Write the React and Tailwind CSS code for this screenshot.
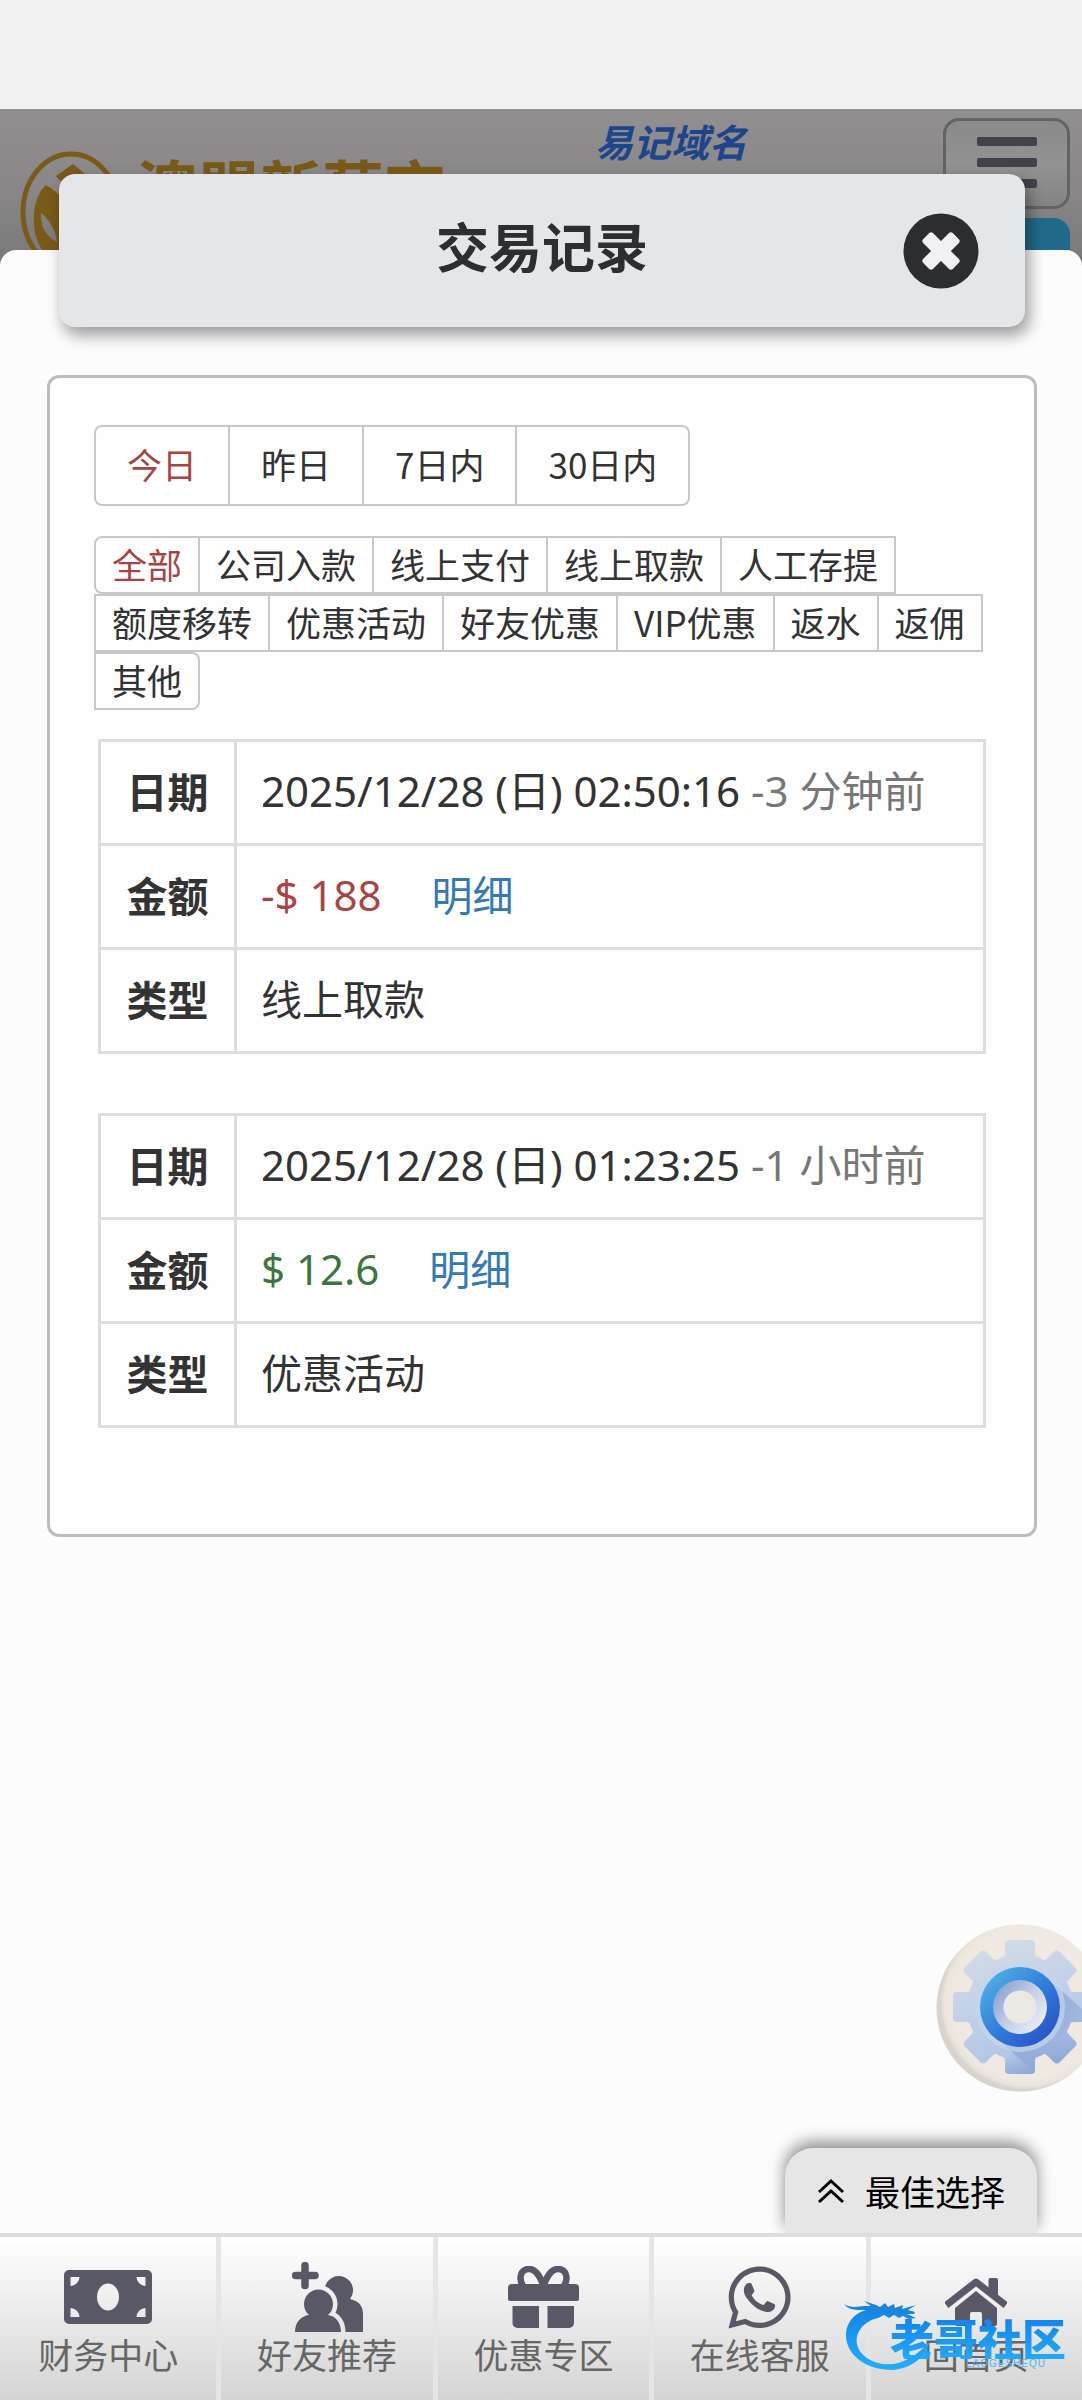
import React from "react";
import { FaWhatsapp } from "react-icons/fa";

const dates = ["今日", "昨日", "7日内", "30日内"];
const categories = [
  ["全部", "公司入款", "线上支付", "线上取款", "人工存提"],
  ["额度移转", "优惠活动", "好友优惠", "VIP优惠", "返水", "返佣"],
  ["其他"],
];
const records = [
  { time: "2025/12/28 (日) 02:50:16", ago: "-3 分钟前", amount: "-$ 188", negative: true, type: "线上取款" },
  { time: "2025/12/28 (日) 01:23:25", ago: "-1 小时前", amount: "$ 12.6", negative: false, type: "优惠活动" },
];

function Emblem() {
  return (
    <svg viewBox="0 0 104 122" className="h-[122px] w-[104px] shrink-0" aria-hidden="true">
      <ellipse cx="52" cy="61" rx="48" ry="58" fill="none" stroke="#7a5a17" strokeWidth="5" />
      <path d="M54 13 L66 23 L54 34 L40 29 L37 25 Z" fill="#7a5a17" />
      <path fillRule="evenodd" d="M27 34 C12 46 9 88 28 104 L52 116 V60 C44 46 37 40 27 34 Z M22 62 C28 66 37 78 38 91 C28 86 21 76 22 62 Z" fill="#7a5a17" />
      <path d="M78 33 C94 46 97 88 75 104 L54 116 V60 C60 46 67 38 78 33 Z" fill="#7a5a17" />
    </svg>
  );
}

function SiteHeader() {
  return (
    <header className="flex h-[165px] items-start overflow-hidden bg-gradient-to-b from-[#918f90] via-[#888686] to-[#777]">
      <div className="mt-[42px] ml-[19px] flex shrink-0 items-start">
        <Emblem />
        <span className="ml-[13px] text-[62px] leading-[70px] font-bold whitespace-nowrap text-[#7a5a17]">澳盟新葡京</span>
      </div>
      <a href="#domain" className="mt-2 ml-[149px] text-[38px] leading-[48px] font-bold whitespace-nowrap text-[#1c458c] italic">
        易记域名
      </a>
      <div className="mt-[9px] mr-3 ml-auto flex flex-col gap-[9px]">
        <button type="button" aria-label="菜单" className="flex h-[91px] w-[127px] flex-col items-center gap-[12px] rounded-2xl border-3 border-[#636363] bg-gradient-to-b from-[#8b8a8a] via-[#929292] to-[#858484] pt-[16px]">
          <span className="h-[9px] w-[60px] rounded-xs bg-[#41404b]" />
          <span className="h-[9px] w-[60px] rounded-xs bg-[#41404b]" />
          <span className="h-[9px] w-[60px] rounded-xs bg-[#41404b]" />
        </button>
        <div className="h-[60px] rounded-2xl bg-[#226a8b]" />
      </div>
    </header>
  );
}

function CloseIcon() {
  return (
    <svg viewBox="0 0 76 76" className="size-[76px]" aria-hidden="true">
      <circle cx="38" cy="38" r="37.5" fill="#2c2d2e" />
      <g fill="#f1f1f4">
        <rect x="17" y="31" width="42" height="14" rx="3" transform="rotate(45 38 38)" />
        <rect x="17" y="31" width="42" height="14" rx="3" transform="rotate(-45 38 38)" />
      </g>
    </svg>
  );
}

function Record({ item }) {
  const th = "w-[136px] border-3 border-[#ddd] pb-[6px] text-center font-bold";
  const td = "border-3 border-[#ddd] pb-1 pl-[24px] text-left font-['Noto_Sans','Noto_Sans_CJK_SC',sans-serif]";
  return (
    <div className="px-1">
      <table className="w-full table-fixed border-collapse text-[41px] leading-[56px] whitespace-nowrap">
        <tbody>
          <tr className="h-[104px]">
            <th scope="row" className={th}>日期</th>
            <td className={td}>
              <span className="text-[42px]">
                {item.time} <span className="text-[#777]">{item.ago}</span>
              </span>
            </td>
          </tr>
          <tr className="h-[104px]">
            <th scope="row" className={th}>金额</th>
            <td className={td}>
              <span className={item.negative ? "text-[42px] text-[#a94442]" : "text-[42px] text-[#3c763d]"}>{item.amount}</span>
              <a href="#detail" className="ml-[50px] text-[#337ab7]">明细</a>
            </td>
          </tr>
          <tr className="h-[104px]">
            <th scope="row" className={th}>类型</th>
            <td className={td}>{item.type}</td>
          </tr>
        </tbody>
      </table>
    </div>
  );
}

function MoneyIcon() {
  return (
    <svg viewBox="0 0 88 54" className="h-[54px] w-[88px]" fill="currentColor" aria-hidden="true">
      <path
        fillRule="evenodd"
        d="M5 0 H83 A5 5 0 0 1 88 5 V49 A5 5 0 0 1 83 54 H5 A5 5 0 0 1 0 49 V5 A5 5 0 0 1 5 0 Z M6.5 7 V16 A9 9 0 0 0 15.5 7 Z M81.5 7 H72.5 A9 9 0 0 0 81.5 16 Z M6.5 47 H15.5 A9 9 0 0 0 6.5 38 Z M81.5 47 V38 A9 9 0 0 0 72.5 47 Z M44 13.5 A11 13.5 0 0 0 44 40.5 A11 13.5 0 0 0 44 13.5 Z"
      />
    </svg>
  );
}

function FriendsIcon() {
  const front = "M3 70 C3 60 9 54 17 53 A14.5 14.5 0 1 1 36 53 C44 54 49 61 49 70 Z";
  return (
    <svg viewBox="0 0 71 71" className="size-[71px]" aria-hidden="true">
      <mask id="friend-gap" maskUnits="userSpaceOnUse" x="0" y="0" width="71" height="71">
        <rect width="71" height="71" fill="white" />
        <path d={front} fill="black" stroke="black" strokeWidth="9" />
      </mask>
      <path d="M13 3.5 V23.5 M3.5 13.5 H23" stroke="currentColor" strokeWidth="7.5" strokeLinecap="round" />
      <path mask="url(#friend-gap)" d="M33 25 A14.2 14.2 0 1 1 58 37 C67 39 71 44 71 52 V70 H33 Z" fill="currentColor" />
      <path d={front} fill="currentColor" />
    </svg>
  );
}

function GiftIcon() {
  return (
    <svg viewBox="0 0 71 62" className="h-[62px] w-[71px]" fill="currentColor" aria-hidden="true">
      <path d="M36 21 C32 10 28 3 21 3 C13 3 10 12 15 20 M35 21 C39 10 43 3 50 3 C58 3 61 12 56 20" fill="none" stroke="currentColor" strokeWidth="6.5" />
      <path d="M4 18 H67 A4 4 0 0 1 71 22 V33 A2 2 0 0 1 69 35 H2 A2 2 0 0 1 0 33 V22 A4 4 0 0 1 4 18 Z" />
      <path d="M4.500 40 H31 V62 H9.500 A5 5 0 0 1 4.500 57 Z M39.500 40 H66 V57 A5 5 0 0 1 61 62 H39.500 Z" />
    </svg>
  );
}

function HomeIcon() {
  return (
    <svg viewBox="0 0 62 48" className="mt-[10px] h-[48px] w-[62px]" fill="currentColor" aria-hidden="true">
      <path d="M45 0 H51 Q53 0 53 2 V21 L43.500 13 V2 Q43.500 0 45 0 Z" />
      <path d="M4 25 L31 4 L58 25" fill="none" stroke="currentColor" strokeWidth="7" strokeLinecap="square" strokeLinejoin="round" />
      <path d="M10 46 V30 L31 13 L52 30 V46 Q52 48 50 48 H37 V36 Q37 34 35 34 H27 Q25 34 25 36 V48 H12 Q10 48 10 46 Z" />
    </svg>
  );
}

const nav = [
  ["财务中心", <MoneyIcon key="i" />],
  ["好友推荐", <FriendsIcon key="i" />],
  ["优惠专区", <GiftIcon key="i" />],
  ["在线客服", <FaWhatsapp key="i" className="size-[71px]" aria-hidden="true" />],
  ["回首页", <HomeIcon key="i" />],
];

function GearIcon() {
  const teeth = [0, 45, 90, 135, 180, 225, 270, 315];
  return (
    <svg viewBox="0 0 168 168" className="size-[168px]" aria-hidden="true">
      <defs>
        <radialGradient id="disc" cx="0.54" cy="0.47" r="0.52">
          <stop offset="0.86" stopColor="#f0e9e2" />
          <stop offset="0.95" stopColor="#eae5dc" />
          <stop offset="1" stopColor="#d8d4cd" />
        </radialGradient>
        <linearGradient id="body" gradientUnits="userSpaceOnUse" x1="60" y1="18" x2="105" y2="150">
          <stop offset="0" stopColor="#d3dbe6" />
          <stop offset="0.5" stopColor="#bfcfe8" />
          <stop offset="0.8" stopColor="#b3c6e6" />
          <stop offset="1" stopColor="#86a1d4" />
        </linearGradient>
        <linearGradient id="ring" x1="0" y1="0.2" x2="0.8" y2="1">
          <stop offset="0" stopColor="#4fb0e4" />
          <stop offset="0.5" stopColor="#2f7fdc" />
          <stop offset="1" stopColor="#2951c8" />
        </linearGradient>
        <linearGradient id="hub" x1="0" y1="0.1" x2="1" y2="0.9">
          <stop offset="0" stopColor="#7f9cd0" />
          <stop offset="0.5" stopColor="#c3cfe6" />
          <stop offset="1" stopColor="#f3f3f5" />
        </linearGradient>
        <linearGradient id="shade" x1="0" y1="0" x2="1" y2="1">
          <stop offset="0" stopColor="#5f7fc0" stopOpacity="0.8" />
          <stop offset="1" stopColor="#a9c0e6" stopOpacity="0.2" />
        </linearGradient>
        <clipPath id="gear-clip">
          <circle cx="84" cy="83" r="53" />
          {teeth.map((a) => (
            <path key={a} transform={`rotate(${a} 84 83)`} d="M66 36 Q69 34 69 28 V20 Q69 16 73 16 H95 Q99 16 99 20 V28 Q99 34 102 36 V50 H66 Z" />
          ))}
        </clipPath>
      </defs>
      <circle cx="84" cy="84" r="83.500" fill="url(#disc)" />
      <g clipPath="url(#gear-clip)">
        <rect width="168" height="168" fill="url(#body)" />
        <path d="M112 55 L168 104 V168 H120 L64 117 Z" fill="url(#shade)" />
        <circle cx="84" cy="83" r="45" fill="#c4d5ea" opacity="0.7" />
      </g>
      <circle cx="84" cy="83" r="40" fill="url(#ring)" />
      <circle cx="84" cy="83" r="27" fill="url(#hub)" />
      <circle cx="84" cy="83" r="16.500" fill="#ece8e3" />
    </svg>
  );
}

function Watermark() {
  return (
    <div className="pointer-events-none absolute right-[16px] bottom-[19px] flex h-[80px] w-[222px] justify-end">
      <svg viewBox="0 0 90 72" className="absolute top-0 left-0 h-[72px] w-[90px]" aria-hidden="true">
        <defs>
          <linearGradient id="dragon" x1="0" y1="0" x2="0" y2="1">
            <stop offset="0" stopColor="#1a7fd6" />
            <stop offset="0.4" stopColor="#1592f3" />
            <stop offset="1" stopColor="#25adf8" />
          </linearGradient>
        </defs>
        <path
          fill="url(#dragon)"
          d="M0 3 C6 7 13 6 20 5 L27 5 L20 0 L32 4 L36 6 L41 2 L44 6 L50 3 L51 7 L59 4 L58 8 L72 4 L64 9 L71 11 L70 13 L63 13 L72 17 L65 18 L59 15 L55 17 L50 14 L45 17 L40 14 L34 17 C20 20 11 31 13 43 C16 60 44 70 64 58 C74 53 80 46 85 41 C83 55 67 68 48 69 C22 69 2 54 2 34 C2 21 11 12 22 9 C14 9 5 10 0 3 Z"
        />
      </svg>
      <div className="flex flex-col items-end pt-[16px]">
        <span className="bg-gradient-to-b from-[#1483ec] to-[#22a9f8] bg-clip-text text-[44px] leading-[42px] font-black whitespace-nowrap text-transparent">老哥社区</span>
        <span className="mr-[20px] font-['Liberation_Sans',sans-serif] text-[10px] leading-[10px] tracking-widest text-[#55b3ee]">LAOGESHEQU</span>
      </div>
    </div>
  );
}

export default function App() {
  return (
    <div className="relative flex min-h-screen flex-col overflow-hidden bg-[#fcfcfc] font-['Noto_Sans_CJK_SC',sans-serif] text-[#333]">
      <div className="h-[109px] bg-[#f1f1f1]" />
      <SiteHeader />

      <main className="relative -mt-[24px] flex-1 rounded-t-2xl bg-[#fcfcfc]">
        <div className="mr-[57px] ml-[59px] -mt-[76px] grid h-[153px] grid-cols-[1fr_auto_1fr] items-center rounded-2xl bg-[#e5e6ea] shadow-[4px_8px_16px_rgba(0,0,0,0.4)]">
          <h1 className="col-start-2 pb-3 text-[53px] leading-[72px] font-bold text-[#2d2e2f]">交易记录</h1>
          <button type="button" aria-label="关闭" className="mr-[46px] justify-self-end">
            <CloseIcon />
          </button>
        </div>

        <section className="mt-12 mr-[45px] ml-[47px] rounded-xl border-3 border-[#bcbcbc] bg-[#fefefe] px-[44px] pt-[47px] pb-[106px]">
          <div className="flex">
            {dates.map((d, i) => (
              <button
                key={d}
                type="button"
                aria-pressed={i === 0}
                className="-mr-[2px] h-[81px] border-2 border-[#c8c8c8] px-[31px] pb-[3px] text-[35px] leading-[48px] first:rounded-l-lg last:rounded-r-lg aria-pressed:text-[#a94442]"
              >
                {d}
              </button>
            ))}
          </div>

          <div className="mt-[30px]">
            {categories.map((row, r) => (
              <div key={r} className="flex">
                {row.map((c, i) => (
                  <button
                    key={c}
                    type="button"
                    aria-pressed={c === "全部"}
                    className={
                      "-mr-[2px] h-[58px] border-2 border-[#c8c8c8] px-[16px] pb-[2px] text-[35px] leading-[48px] whitespace-nowrap aria-pressed:text-[#a94442]" +
                      (r === 0 && i === 0 ? " rounded-l-lg" : "") +
                      (r === 2 ? " rounded-r-lg" : "")
                    }
                  >
                    {c}
                  </button>
                ))}
              </div>
            ))}
          </div>

          <div className="mt-[29px] flex flex-col gap-[59px]">
            {records.map((item) => (
              <Record key={item.time} item={item} />
            ))}
          </div>
        </section>
      </main>

      <button type="button" aria-label="设置" className="absolute right-[-22px] bottom-[308px] rounded-full">
        <GearIcon />
      </button>

      <div className="absolute right-[13px] bottom-[167px] overflow-hidden px-8 pt-8">
        <button type="button" className="flex h-[85px] w-[252px] items-center justify-center gap-[20px] rounded-t-[28px] bg-[#e6e6e6] text-[35px] leading-[48px] text-black shadow-[0_-6px_16px_rgba(0,0,0,0.45)]">
          <svg viewBox="0 0 28 26" className="h-[26px] w-[28px]" fill="none" stroke="currentColor" strokeWidth="3" aria-hidden="true">
            <path d="M2 14 L14 3 L26 14 M2 24 L14 13 L26 24" />
          </svg>
          最佳选择
        </button>
      </div>

      <nav className="flex border-t-4 border-[#ddd] bg-gradient-to-b from-white to-[#d4d4d4]">
        {nav.map(([label, icon]) => (
          <a key={label} href="#nav" className="flex h-[163px] w-1/5 flex-col items-center border-l-5 border-[#e5e5e5] pt-[24px] text-[#595866] first:border-l-0">
            <span className="flex h-[72px] items-center">{icon}</span>
            <span className="text-[35px] leading-[42px] text-[#666]">{label}</span>
          </a>
        ))}
      </nav>
      <Watermark />
    </div>
  );
}
